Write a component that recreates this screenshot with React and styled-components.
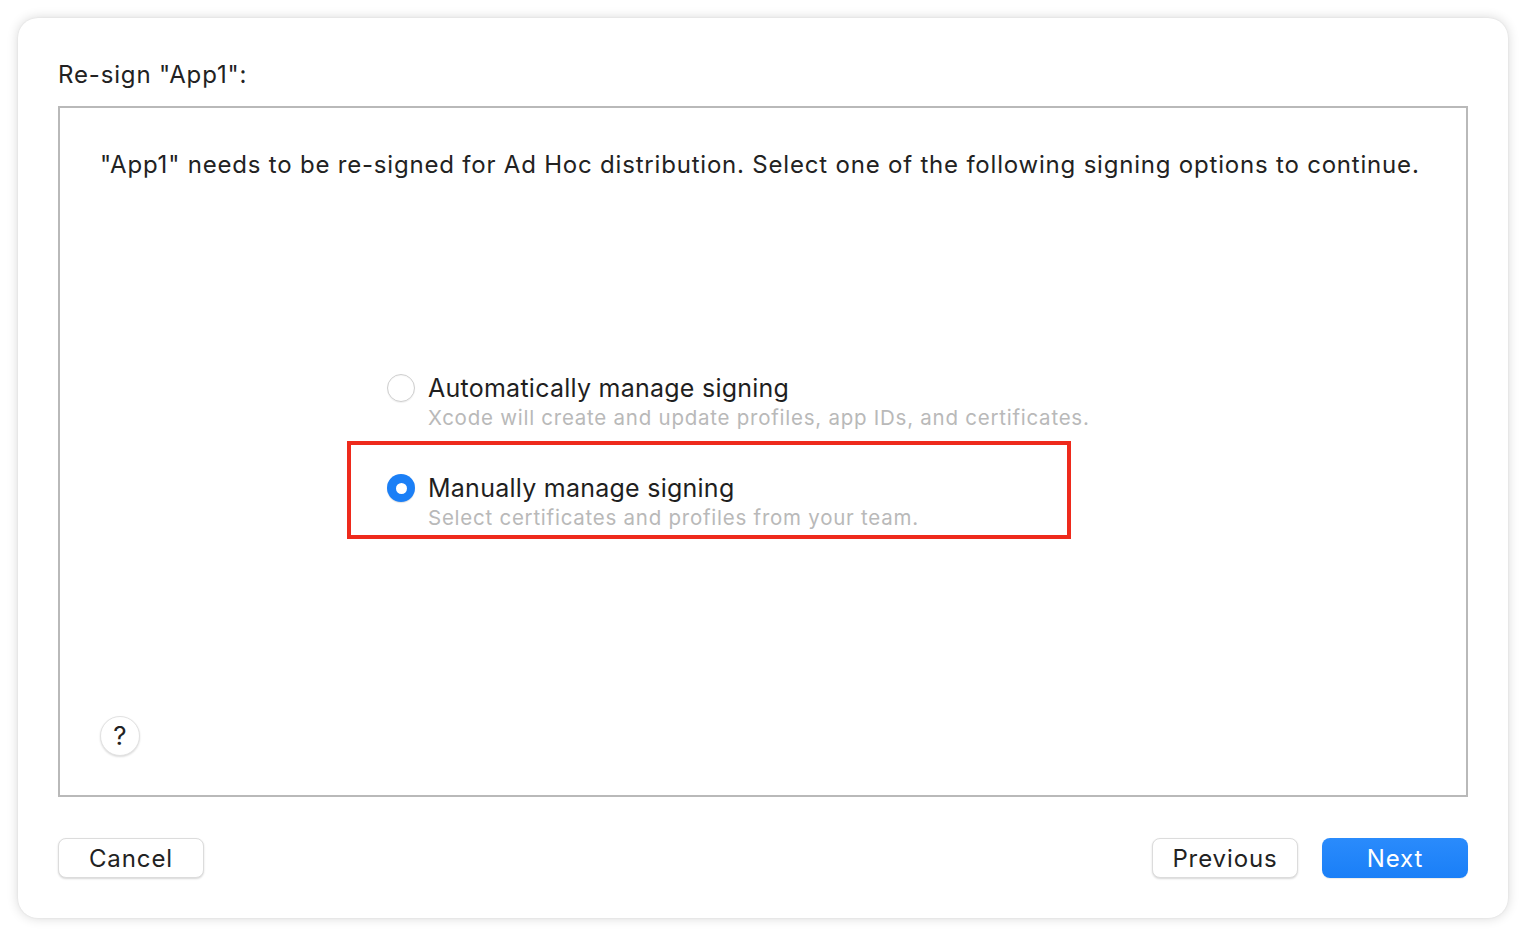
import React from "react";
import styled, { createGlobalStyle } from "styled-components";

const Global = createGlobalStyle`
  html, body {
    margin: 0;
    padding: 0;
    background: #ffffff;
  }
  body {
    font-family: Inter, "Noto Sans", "Liberation Sans", sans-serif;
    color: #222222;
    -webkit-font-smoothing: antialiased;
  }
`;

const Page = styled.div`
  width: 1526px;
  height: 936px;
  padding: 18px;
  box-sizing: border-box;
`;

const Window = styled.div`
  height: 900px;
  box-sizing: border-box;
  background: #ffffff;
  border-radius: 20px;
  box-shadow: 0 0 12px rgba(0, 0, 0, 0.16), 0 0 2px rgba(0, 0, 0, 0.08);
  padding: 42px 40px 40px;
  display: flex;
  flex-direction: column;
`;

const Title = styled.div`
  font-size: 24px;
  line-height: 30px;
  letter-spacing: 0.85px;
  margin-bottom: 16px;
`;

const Panel = styled.div`
  flex: 1;
  border: 2px solid #b9b9b9;
  padding: 42px 40px 39px;
  display: flex;
  flex-direction: column;
`;

const Intro = styled.div`
  font-size: 24px;
  line-height: 30px;
  letter-spacing: 0.8px;
`;

const Options = styled.div`
  margin-top: 193px;
  margin-left: 287px;
  display: flex;
  flex-direction: column;
  gap: 40px;
`;

const Option = styled.div`
  position: relative;
  display: grid;
  grid-template-columns: 28px auto;
  column-gap: 13px;
  align-items: center;

  &::after {
    content: "";
    display: ${({ $marked }) => ($marked ? "block" : "none")};
    position: absolute;
    left: -40px;
    top: -32px;
    width: 724px;
    height: 98px;
    border: 4px solid #ee2a1c;
    box-sizing: border-box;
  }
`;

const Radio = styled.span`
  width: 28px;
  height: 28px;
  border-radius: 50%;
  box-sizing: border-box;
  display: flex;
  align-items: center;
  justify-content: center;
  background: ${({ $checked }) => ($checked ? "#1b7ff6" : "#ffffff")};
  border: ${({ $checked }) => ($checked ? "none" : "1px solid #cfcfcf")};
  box-shadow: ${({ $checked }) =>
    $checked ? "0 1px 1px rgba(0,0,0,0.12)" : "inset 0 1px 1px rgba(0,0,0,0.04), 0 1px 1px rgba(0,0,0,0.06)"};

  &::before {
    content: "";
    display: ${({ $checked }) => ($checked ? "block" : "none")};
    width: 11px;
    height: 11px;
    border-radius: 50%;
    background: #ffffff;
  }
`;

const Label = styled.div`
  font-size: 25px;
  line-height: 30px;
  letter-spacing: 0.25px;
  color: #1f1f1f;
`;

const Hint = styled.div`
  grid-column: 2;
  font-size: 20.5px;
  line-height: 30px;
  letter-spacing: 0.75px;
  color: #b9b9b9;
`;

const Help = styled.button`
  margin-top: auto;
  width: 40px;
  height: 40px;
  border-radius: 50%;
  border: 1px solid #e2e2e2;
  background: #ffffff;
  box-shadow: 0 1px 2px rgba(0, 0, 0, 0.14);
  font-family: inherit;
  font-size: 26px;
  line-height: 1;
  color: #222222;
  padding: 0;
  display: flex;
  align-items: center;
  justify-content: center;
`;

const Footer = styled.div`
  margin-top: 41px;
  display: flex;
  align-items: center;
  gap: 24px;
`;

const Spacer = styled.div`
  flex: 1;
`;

const Button = styled.button`
  width: 146px;
  height: 40px;
  border-radius: 8px;
  font-family: inherit;
  font-size: 24px;
  letter-spacing: 0.9px;
  padding: 0;
  border: ${({ $primary }) => ($primary ? "none" : "1px solid #dcdcdc")};
  color: ${({ $primary }) => ($primary ? "#ffffff" : "#222222")};
  background: ${({ $primary }) =>
    $primary ? "linear-gradient(#2a8bfc, #1a7ff7)" : "#ffffff"};
  box-shadow: ${({ $primary }) =>
    $primary ? "0 1px 1px rgba(0,0,0,0.08)" : "0 1px 2px rgba(0,0,0,0.16)"};
`;

export default function App() {
  return (
    <Page>
      <Global />
      <Window>
        <Title>Re-sign "App1":</Title>
        <Panel>
          <Intro>
            "App1" needs to be re-signed for Ad Hoc distribution. Select one of the following signing options to continue.
          </Intro>
          <Options>
            <Option>
              <Radio />
              <Label>Automatically manage signing</Label>
              <Hint>Xcode will create and update profiles, app IDs, and certificates.</Hint>
            </Option>
            <Option $marked>
              <Radio $checked />
              <Label>Manually manage signing</Label>
              <Hint>Select certificates and profiles from your team.</Hint>
            </Option>
          </Options>
          <Help>?</Help>
        </Panel>
        <Footer>
          <Button>Cancel</Button>
          <Spacer />
          <Button>Previous</Button>
          <Button $primary>Next</Button>
        </Footer>
      </Window>
    </Page>
  );
}
